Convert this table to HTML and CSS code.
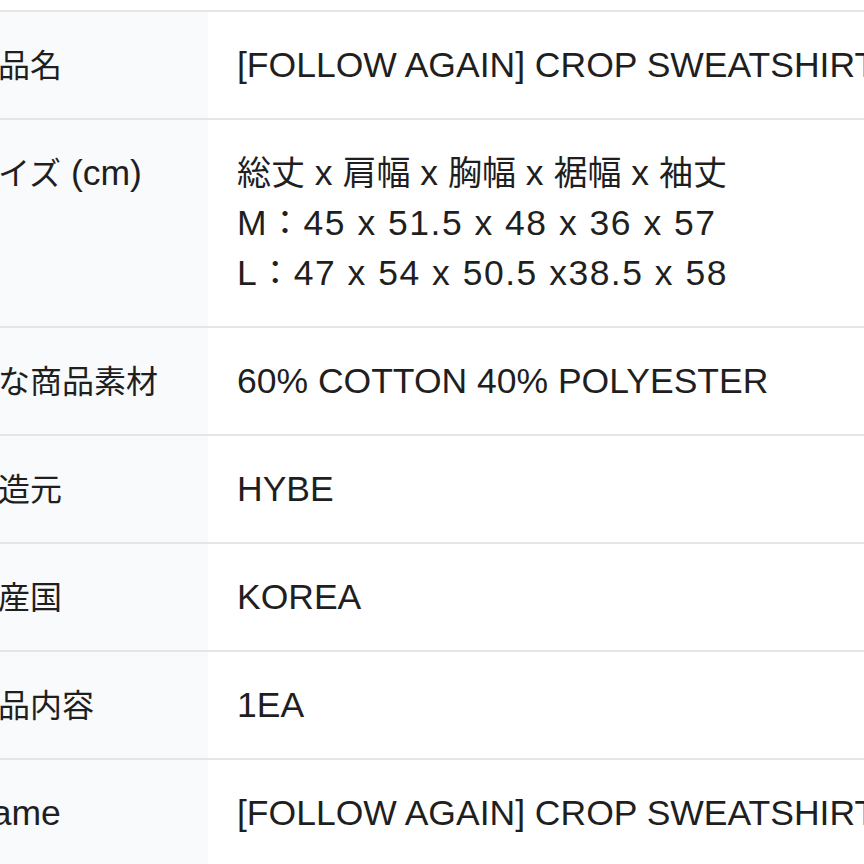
FILE: index.html
```html
<!DOCTYPE html>
<html lang="ja">
<head>
<meta charset="utf-8">
<title>商品情報</title>
<link rel="stylesheet" href="styles.css">
</head>
<body>
<div class="spec">
  <div class="row">
    <div class="label"><span class="ja">商品名</span></div>
    <div class="value">[FOLLOW AGAIN] CROP SWEATSHIRT</div>
  </div>
  <div class="row">
    <div class="label"><span class="ja">サイズ</span> (cm)</div>
    <div class="value">
      <div><span class="ja">総丈</span> x <span class="ja">肩幅</span> x <span class="ja">胸幅</span> x <span class="ja">裾幅</span> x <span class="ja">袖丈</span></div>
      <div class="nums">M<span class="ja">：</span>45 x 51.5 x 48 x 36 x 57</div>
      <div class="nums">L<span class="ja">：</span>47 x 54 x 50.5 x38.5 x 58</div>
    </div>
  </div>
  <div class="row">
    <div class="label"><span class="ja">主な商品素材</span></div>
    <div class="value">60% COTTON 40% POLYESTER</div>
  </div>
  <div class="row">
    <div class="label"><span class="ja">製造元</span></div>
    <div class="value">HYBE</div>
  </div>
  <div class="row">
    <div class="label"><span class="ja">原産国</span></div>
    <div class="value">KOREA</div>
  </div>
  <div class="row">
    <div class="label"><span class="ja">商品内容</span></div>
    <div class="value">1EA</div>
  </div>
  <div class="row">
    <div class="label">Name</div>
    <div class="value">[FOLLOW AGAIN] CROP SWEATSHIRT</div>
  </div>
</div>
</body>
</html>
```

FILE: styles.css
```css
html, body {
  margin: 0;
  padding: 0;
  background: #ffffff;
  overflow: hidden;
}

body {
  padding-top: 10px;
  font-family: "Liberation Sans", "Noto Sans CJK JP", sans-serif;
  font-size: 35.5px;
  line-height: 50px;
  color: #1f1f1f;
}

.spec {
  margin-left: -62px;
  width: 1100px;
}

.row {
  display: grid;
  grid-template-columns: 270px 1fr;
  border-top: 2px solid #e5e5e7;
}

.label {
  background: #f9fafb;
  padding: 28px 0 28px 28px;
  white-space: nowrap;
}

.value {
  padding: 28px 0 28px 29px;
  white-space: nowrap;
}

.ja {
  font-family: "Noto Sans CJK JP", sans-serif;
  font-size: 32px;
  line-height: 1;
}

.value .ja {
  font-size: 34px;
}

.nums {
  letter-spacing: 1.5px;
}
```
